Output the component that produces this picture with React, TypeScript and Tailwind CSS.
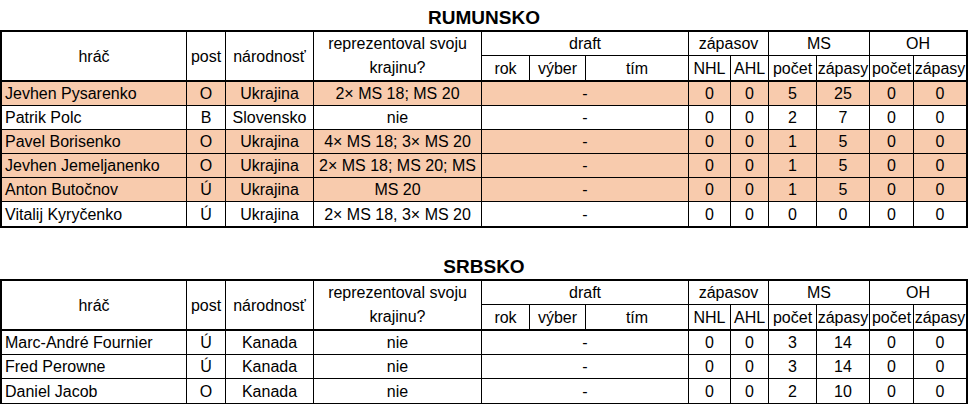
import React from 'react';

type Row = {
  name: string;
  post: string;
  nat: string;
  rep: string;
  stats: string[];
  hl?: boolean;
};

const romania: Row[] = [
  { name: 'Jevhen Pysarenko', post: 'O', nat: 'Ukrajina', rep: '2× MS 18; MS 20', stats: ['0', '0', '5', '25', '0', '0'], hl: true },
  { name: 'Patrik Polc', post: 'B', nat: 'Slovensko', rep: 'nie', stats: ['0', '0', '2', '7', '0', '0'] },
  { name: 'Pavel Borisenko', post: 'O', nat: 'Ukrajina', rep: '4× MS 18; 3× MS 20', stats: ['0', '0', '1', '5', '0', '0'], hl: true },
  { name: 'Jevhen Jemeljanenko', post: 'O', nat: 'Ukrajina', rep: '2× MS 18; MS 20; MS', stats: ['0', '0', '1', '5', '0', '0'], hl: true },
  { name: 'Anton Butočnov', post: 'Ú', nat: 'Ukrajina', rep: 'MS 20', stats: ['0', '0', '1', '5', '0', '0'], hl: true },
  { name: 'Vitalij Kyryčenko', post: 'Ú', nat: 'Ukrajina', rep: '2× MS 18, 3× MS 20', stats: ['0', '0', '0', '0', '0', '0'] },
];

const serbia: Row[] = [
  { name: 'Marc-André Fournier', post: 'Ú', nat: 'Kanada', rep: 'nie', stats: ['0', '0', '3', '14', '0', '0'] },
  { name: 'Fred Perowne', post: 'Ú', nat: 'Kanada', rep: 'nie', stats: ['0', '0', '3', '14', '0', '0'] },
  { name: 'Daniel Jacob', post: 'O', nat: 'Kanada', rep: 'nie', stats: ['0', '0', '2', '10', '0', '0'] },
];

const cell = 'border-r border-b border-black p-0 whitespace-nowrap overflow-hidden text-center';

const RosterTable: React.FC<{ title: string; rows: Row[] }> = ({ title, rows }) => (
  <section className="w-[968px]">
    <div className="h-[30px] flex items-center justify-center pt-[5px]">
      <h2 className="text-[19px] font-bold leading-none">{title}</h2>
    </div>
    <div className="border-2 border-black">
      <table className="table-fixed border-separate border-spacing-0 w-[964px] text-[16px] leading-[23px]">
        <colgroup>
          <col className="w-[185px]" />
          <col className="w-[39px]" />
          <col className="w-[88px]" />
          <col className="w-[168px]" />
          <col className="w-[48px]" />
          <col className="w-[56px]" />
          <col className="w-[103px]" />
          <col className="w-[42px]" />
          <col className="w-[38px]" />
          <col className="w-[48px]" />
          <col className="w-[53px]" />
          <col className="w-[44px]" />
          <col className="w-[52px]" />
        </colgroup>
        <thead>
          <tr className="h-[24px]">
            <th rowSpan={2} className={`${cell} font-normal border-b-2`}>hráč</th>
            <th rowSpan={2} className={`${cell} font-normal border-b-2`}>post</th>
            <th rowSpan={2} className={`${cell} font-normal border-b-2`}>národnosť</th>
            <th rowSpan={2} className={`${cell} font-normal border-b-2 leading-[24px]`}>
              reprezentoval svoju
              <br />
              krajinu?
            </th>
            <th colSpan={3} className={`${cell} font-normal`}>draft</th>
            <th colSpan={2} className={`${cell} font-normal`}>zápasov</th>
            <th colSpan={2} className={`${cell} font-normal`}>MS</th>
            <th colSpan={2} className={`${cell} font-normal border-r-0`}>OH</th>
          </tr>
          <tr className="h-[24px]">
            {['rok', 'výber', 'tím', 'NHL', 'AHL', 'počet', 'zápasy', 'počet', 'zápasy'].map((h, i) => (
              <th key={i} className={`${cell} font-normal border-b-2 ${i === 8 ? 'border-r-0' : ''}`}>
                {h}
              </th>
            ))}
          </tr>
        </thead>
        <tbody>
          {rows.map((r, ri) => {
            const last = ri === rows.length - 1;
            const bb = last ? 'border-b-0' : '';
            return (
              <tr key={r.name} className={`h-[24px] ${r.hl ? 'bg-[#f8cbad]' : ''}`}>
                <td className={`${cell} ${bb} text-left pl-[3px]`}>{r.name}</td>
                <td className={`${cell} ${bb}`}>{r.post}</td>
                <td className={`${cell} ${bb}`}>{r.nat}</td>
                <td className={`${cell} ${bb}`}>{r.rep}</td>
                <td colSpan={3} className={`${cell} ${bb}`}>-</td>
                {r.stats.map((s, si) => (
                  <td key={si} className={`${cell} ${bb} ${si === 5 ? 'border-r-0' : ''}`}>
                    {s}
                  </td>
                ))}
              </tr>
            );
          })}
        </tbody>
      </table>
    </div>
  </section>
);

export default function App() {
  return (
    <div className="w-[970px] h-[404px] bg-white text-black overflow-hidden font-['Liberation_Sans',Arial,sans-serif]">
      <RosterTable title="RUMUNSKO" rows={romania} />
      <div className="mt-[21px]">
        <RosterTable title="SRBSKO" rows={serbia} />
      </div>
    </div>
  );
}
